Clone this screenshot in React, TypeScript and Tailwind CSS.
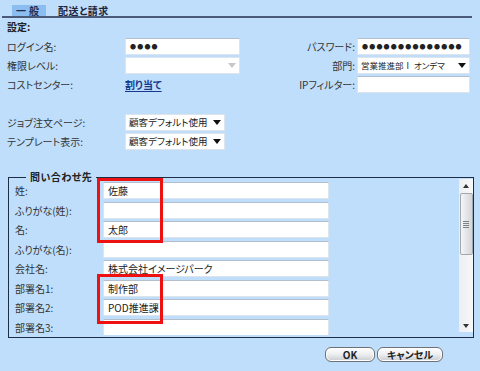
import React from "react";

const font = "font-['Noto_Sans_CJK_JP','Noto_Sans',sans-serif] [font-feature-settings:'palt']";

function TextBox({ value, w, pw }: { value?: string; w: string; pw?: boolean }) {
  return (
    <div
      className={`${w} h-[17px] bg-white border border-[#dde4eb] border-t-[#b3bfcc] pl-[4px] flex items-center text-[#222] overflow-hidden whitespace-nowrap ${
        pw ? "text-[6px] tracking-[1.2px]" : "text-[10px]"
      }`}
    >
      {value}
    </div>
  );
}

function Select({ value, w, disabled, small }: { value?: string; w: string; disabled?: boolean; small?: boolean }) {
  return (
    <div
      className={`${w} h-[17px] bg-white border border-[#dde4eb] flex items-center gap-[3px] pl-[3px] pr-[3px] text-[#222] ${
        small ? "text-[8.5px]" : "text-[9.5px]"
      }`}
    >
      <span className="flex-1 whitespace-nowrap overflow-hidden">{value}</span>
      <span
        className={`shrink-0 w-0 h-0 border-l-[4px] border-r-[4px] border-t-[5px] border-l-transparent border-r-transparent ${
          disabled ? "border-t-[#c4c8cc]" : "border-t-[#111]"
        }`}
      />
    </div>
  );
}

const contacts = [
  { label: "姓:", value: "佐藤" },
  { label: "ふりがな(姓):", value: "" },
  { label: "名:", value: "太郎" },
  { label: "ふりがな(名):", value: "" },
  { label: "会社名:", value: "株式会社イメージパーク" },
  { label: "部署名1:", value: "制作部" },
  { label: "部署名2:", value: "POD推進課" },
  { label: "部署名3:", value: "" },
];

function Scrollbar() {
  return (
    <div className="w-[14px] h-[153px] bg-gradient-to-r from-[#eceef1] to-[#f7f8fa] flex flex-col items-center">
      <div className="h-[14px] flex items-center justify-center">
        <span className="w-0 h-0 border-l-[3px] border-r-[3px] border-b-[4px] border-l-transparent border-r-transparent border-b-[#333]" />
      </div>
      <div className="w-[13px] h-[62px] rounded-[2px] border border-[#a3a8ae] bg-gradient-to-r from-[#f4f5f6] via-[#e3e5e8] to-[#d3d6da] flex flex-col items-center justify-center gap-[1px]">
        <span className="w-[6px] h-px bg-[#7d838a]" />
        <span className="w-[6px] h-px bg-[#7d838a]" />
        <span className="w-[6px] h-px bg-[#7d838a]" />
        <span className="w-[6px] h-px bg-[#7d838a]" />
      </div>
      <div className="flex-1" />
      <div className="h-[12px] flex items-center justify-center">
        <span className="w-0 h-0 border-l-[3px] border-r-[3px] border-t-[4px] border-l-transparent border-r-transparent border-t-[#333]" />
      </div>
    </div>
  );
}

function Btn({ label, w }: { label: string; w: string }) {
  return (
    <button
      className={`${w} h-[15px] rounded-[6px] border border-[#6d7176] bg-gradient-to-b from-white via-[#eceef0] to-[#c9ccd0] shadow-[inset_0_0_0_1px_#fff] text-[10px] font-bold text-[#222] leading-none flex items-center justify-center`}
    >
      {label}
    </button>
  );
}

export default function App() {
  return (
    <div className={`w-[480px] h-[371px] bg-[#bfdefb] overflow-hidden pt-[5px] text-[#333] ${font}`}>
      {/* tabs */}
      <div className="mx-[2px] w-[470px] h-[13px] border-b-[2px] border-[#4a5a78] flex pl-[10px] text-[10px] font-bold leading-[11px]">
        <div className="w-[34px] bg-[#8bbdf1] text-[#1d2b55] flex items-center justify-center tracking-[3px]">一般</div>
        <div className="ml-[12px] text-[#1d2540] flex items-center tracking-[0.5px]">配送と請求</div>
      </div>

      <div className="mt-[3px] pl-[7px] h-[12px] leading-[12px] text-[10px] font-bold text-[#222]">設定:</div>

      {/* settings */}
      <div className="mt-[5px] flex flex-col gap-[2px] text-[10px]">
        <div className="flex items-center">
          <div className="w-[125px] pl-[7px]">ログイン名:</div>
          <TextBox w="w-[115px]" value="●●●●" pw />
          <div className="flex-1 text-right pr-[2px]">パスワード:</div>
          <TextBox w="w-[113px]" value="●●●●●●●●●●●●●●" pw />
          <div className="w-[10px]" />
        </div>
        <div className="flex items-center">
          <div className="w-[125px] pl-[7px]">権限レベル:</div>
          <Select w="w-[115px]" disabled />
          <div className="flex-1 text-right pr-[2px]">部門:</div>
          <Select w="w-[113px]" value="営業推進部Ⅰ オンデマ" small />
          <div className="w-[10px]" />
        </div>
        <div className="flex items-center">
          <div className="w-[125px] pl-[7px]">コストセンター:</div>
          <a className="w-[115px] font-bold text-[#17398c] underline underline-offset-2">
            割り当て
          </a>
          <div className="flex-1 text-right pr-[2px]">IPフィルター:</div>
          <TextBox w="w-[113px]" />
          <div className="w-[10px]" />
        </div>
      </div>

      <div className="mt-[21px] flex flex-col gap-[2px] text-[10px]">
        <div className="flex items-center">
          <div className="w-[125px] pl-[7px]">ジョブ注文ページ:</div>
          <Select w="w-[100px]" value="顧客デフォルト使用" />
        </div>
        <div className="flex items-center">
          <div className="w-[125px] pl-[7px]">テンプレート表示:</div>
          <Select w="w-[100px]" value="顧客デフォルト使用" />
        </div>
      </div>

      {/* contact */}
      <fieldset className="relative mt-[21px] ml-[8px] w-[466px] h-[167px] border border-[#1f2c46]">
        <legend className="ml-[17px] px-[4px] text-[10px] font-bold leading-[12px] text-[#222] tracking-[0.5px]">問い合わせ先</legend>
        <div className="flex h-[156px] -mt-[4px]">
          <div className="flex-1 pt-[3px] flex flex-col gap-[2.5px] overflow-hidden text-[10px]">
            {contacts.map((c) => (
              <div key={c.label} className="flex items-center shrink-0">
                <div className="w-[94px] pl-[6px]">{c.label}</div>
                <TextBox w="w-[226px]" value={c.value} />
              </div>
            ))}
          </div>
          <Scrollbar />
        </div>

        {/* highlight boxes */}
        <div className="absolute left-[88px] top-[-5px] w-[66px] h-[65px] border-[3px] border-[#ee1111]" />
        <div className="absolute left-[88px] top-[91px] w-[66px] h-[50px] border-[3px] border-[#ee1111]" />
      </fieldset>

      <div className="mt-[9px] flex gap-[2px] pl-[325px]">
        <Btn label="OK" w="w-[50px]" />
        <Btn label="キャンセル" w="w-[66px]" />
      </div>
    </div>
  );
}
